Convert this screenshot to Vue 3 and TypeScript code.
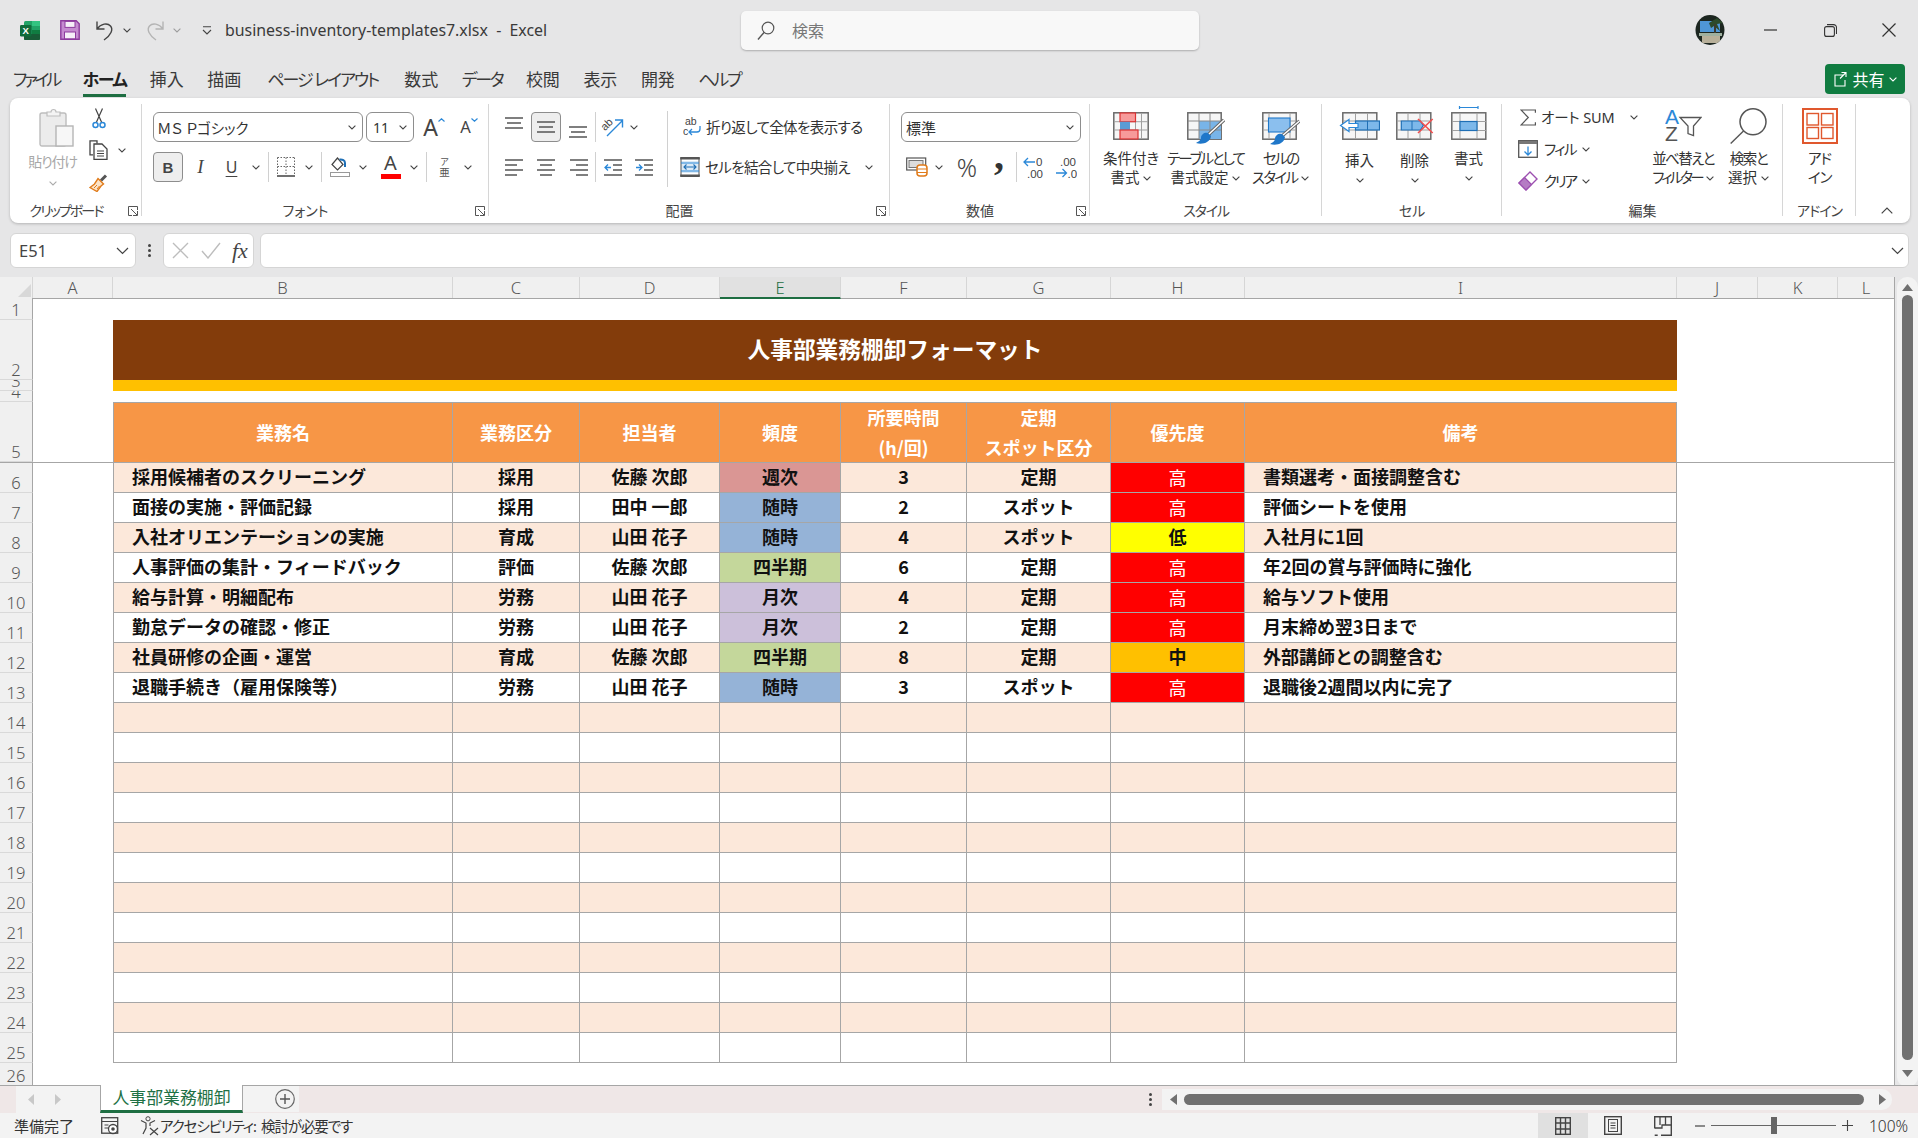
<script setup lang="ts">
interface DataRow {
  num: number
  name: string
  kind: string
  owner: string
  freq: string
  hours: string
  type: string
  prio: string
  note: string
}

const columns = ['A', 'B', 'C', 'D', 'E', 'F', 'G', 'H', 'I', 'J', 'K', 'L']

const rows: DataRow[] = [
  { num: 6, name: '採用候補者のスクリーニング', kind: '採用', owner: '佐藤 次郎', freq: '週次', hours: '3', type: '定期', prio: '高', note: '書類選考・面接調整含む' },
  { num: 7, name: '面接の実施・評価記録', kind: '採用', owner: '田中 一郎', freq: '随時', hours: '2', type: 'スポット', prio: '高', note: '評価シートを使用' },
  { num: 8, name: '入社オリエンテーションの実施', kind: '育成', owner: '山田 花子', freq: '随時', hours: '4', type: 'スポット', prio: '低', note: '入社月に1回' },
  { num: 9, name: '人事評価の集計・フィードバック', kind: '評価', owner: '佐藤 次郎', freq: '四半期', hours: '6', type: '定期', prio: '高', note: '年2回の賞与評価時に強化' },
  { num: 10, name: '給与計算・明細配布', kind: '労務', owner: '山田 花子', freq: '月次', hours: '4', type: '定期', prio: '高', note: '給与ソフト使用' },
  { num: 11, name: '勤怠データの確認・修正', kind: '労務', owner: '山田 花子', freq: '月次', hours: '2', type: '定期', prio: '高', note: '月末締め翌3日まで' },
  { num: 12, name: '社員研修の企画・運営', kind: '育成', owner: '佐藤 次郎', freq: '四半期', hours: '8', type: '定期', prio: '中', note: '外部講師との調整含む' },
  { num: 13, name: '退職手続き（雇用保険等）', kind: '労務', owner: '山田 花子', freq: '随時', hours: '3', type: 'スポット', prio: '高', note: '退職後2週間以内に完了' }
]

const emptyRows = Array.from({ length: 12 }, (_, i) => 14 + i)

const tabs = [
  { label: 'ファイル', cls: 'tab-file' },
  { label: 'ホーム', cls: 'active' },
  { label: '挿入', cls: '' },
  { label: '描画', cls: '' },
  { label: 'ページ レイアウト', cls: 'tab-page' },
  { label: '数式', cls: 'tab-formula' },
  { label: 'データ', cls: 'tab-kana' },
  { label: '校閲', cls: '' },
  { label: '表示', cls: '' },
  { label: '開発', cls: '' },
  { label: 'ヘルプ', cls: 'tab-kana' }
]

const freqClass: Record<string, string> = { 週次: 'f-week', 随時: 'f-any', 四半期: 'f-quarter', 月次: 'f-month' }
const prioClass: Record<string, string> = { 高: 'p-high', 中: 'p-mid', 低: 'p-low' }
</script>

<template>
  <div class="app">
    <svg class="sprite" width="0" height="0">
      <symbol id="chev" viewBox="0 0 8 5"><path d="M.6.6 4 4 7.400.6" fill="none" stroke="#444" stroke-width="1.100" /></symbol>
      <symbol id="launch" viewBox="0 0 10 10"><path d="M9.500 4V.5H.5v9H4M3 3l6 6M9.500 5v4.500H5" fill="none" stroke="#555" stroke-width="1" /></symbol>
      <symbol id="lines-l" viewBox="0 0 18 17"><path d="M0 1h18M0 6h12M0 11h18M0 16h12" stroke="#555" stroke-width="1.400" /></symbol>
      <symbol id="lines-c" viewBox="0 0 18 17"><path d="M0 1h18M3 6h12M0 11h18M3 16h12" stroke="#555" stroke-width="1.400" /></symbol>
      <symbol id="lines-r" viewBox="0 0 18 17"><path d="M0 1h18M6 6h12M0 11h18M6 16h12" stroke="#555" stroke-width="1.400" /></symbol>
      <symbol id="lines-v" viewBox="0 0 18 12"><path d="M0 1h18M2 6h14M0 11h18" stroke="#555" stroke-width="1.400" /></symbol>
    </svg>

    <header class="titlebar">
      <div class="title-left">
        <svg class="i-xl" width="21" height="21" viewBox="0 0 21 21">
          <rect x="4" y="1" width="16" height="19" rx="1.500" fill="#21a366" />
          <rect x="12" y="1" width="8" height="5" fill="#33c481" />
          <rect x="12" y="10" width="8" height="5" fill="#107c41" />
          <rect x="4" y="14" width="16" height="6" rx="1" fill="#185c37" />
          <rect x="0" y="5" width="11.500" height="11.500" rx="1.200" fill="#0f6b3a" />
          <text x="5.700" y="14.200" text-anchor="middle" font-size="9.500" font-weight="700" fill="#fff" font-family="Liberation Sans">X</text>
        </svg>
        <svg class="i-save" width="20" height="20" viewBox="0 0 20 20">
          <path d="M.8.8h15.400l3 3v15.400H.8z" fill="#c58bd0" stroke="#8e3b9e" stroke-width="1.400" />
          <rect x="5" y="1.400" width="10" height="6" fill="#f6eef8" stroke="#8e3b9e" />
          <rect x="4.500" y="12" width="11" height="6.800" fill="#f6eef8" stroke="#8e3b9e" />
        </svg>
        <svg class="i-undo" width="20" height="21" viewBox="0 0 20 21"><path d="M2 1.500v7.500h7.500M2 9C6 3.500 12.500 2.500 15.500 6 18.500 9.500 16 15 9 20" fill="none" stroke="#444" stroke-width="1.400" /></svg>
        <svg class="chev qat-chev"><use href="#chev" /></svg>
        <svg class="i-redo" width="20" height="21" viewBox="0 0 20 21"><path d="M18 1.500v7.500h-7.500M18 9C14 3.500 7.500 2.500 4.500 6 1.500 9.500 4 15 11 20" fill="none" stroke="#b4b4b4" stroke-width="1.400" /></svg>
        <svg class="chev qat-chev dim"><use href="#chev" /></svg>
        <svg class="i-more" width="10" height="9" viewBox="0 0 10 9"><path d="M1 .8h8M1 4l4 4 4-4" fill="none" stroke="#444" stroke-width="1.100" /></svg>
        <span class="doc-title">business-inventory-templates7.xlsx&nbsp; - &nbsp;Excel</span>
      </div>
      <div class="search">
        <svg width="18" height="20" viewBox="0 0 18 20"><circle cx="11" cy="7" r="5.800" fill="none" stroke="#555" stroke-width="1.200" /><path d="M7 11.500 1 18.500" stroke="#555" stroke-width="1.400" /></svg>
        <span>検索</span>
      </div>
      <div class="title-right">
        <svg class="avatar" width="30" height="30" viewBox="0 0 30 30">
          <defs><clipPath id="av"><ellipse cx="15" cy="15" rx="14.500" ry="15" /></clipPath></defs>
          <g clip-path="url(#av)">
            <rect width="30" height="30" fill="#1c2620" />
            <rect x="5" y="6" width="20" height="11" fill="#4f96d6" />
            <path d="M14 8l8-5 6 5-6 1 3 7-6-5-3 2z" fill="#2c4a2c" />
            <rect x="19" y="9" width="2" height="12" fill="#3b3b30" />
            <rect x="4" y="18" width="23" height="3" fill="#9fb0a0" />
            <rect x="7" y="21" width="18" height="7" fill="#b8b09a" />
          </g>
        </svg>
        <div class="winbtn"><svg width="13" height="2" viewBox="0 0 13 2"><path d="M0 1h13" stroke="#333" stroke-width="1.200" /></svg></div>
        <div class="winbtn"><svg width="13" height="13" viewBox="0 0 13 13"><rect x=".6" y="2.600" width="9.800" height="9.800" rx="2" fill="none" stroke="#333" stroke-width="1.100" /><path d="M3 .6h6.500a3 3 0 0 1 3 3V10" fill="none" stroke="#333" stroke-width="1.100" /></svg></div>
        <div class="winbtn last"><svg width="14" height="14" viewBox="0 0 14 14"><path d="M.5.5l13 13M13.500.5l-13 13" stroke="#333" stroke-width="1.200" /></svg></div>
      </div>
    </header>

    <nav class="tabsrow">
      <span v-for="t in tabs" :key="t.label" class="tab" :class="t.cls">{{ t.label }}</span>
      <button class="share">
        <svg width="15" height="16" viewBox="0 0 15 16"><path d="M8.500 1.500h4.500V6M13 1.500 7 7.500M10 4H2v11h10V9" fill="none" stroke="#fff" stroke-width="1.100" /></svg>
        <span>共有</span>
        <svg class="chev white"><use href="#chev" /></svg>
      </button>
    </nav>

    <section class="ribbon">
      <!-- クリップボード -->
      <div class="grp g-clip">
        <div class="grp-body clip-body">
          <div class="paste">
            <svg width="35" height="39" viewBox="0 0 35 39">
              <rect x="1" y="5" width="26" height="33" rx="2" fill="#ececec" stroke="#bdbdbd" stroke-width="1.400" />
              <path d="M8 8V4h4a2.500 2.500 0 0 1 5 0h4v4z" fill="#f4f4f4" stroke="#bdbdbd" stroke-width="1.200" />
              <rect x="17" y="18" width="17" height="20" fill="#f7f7f7" stroke="#b5b5b5" stroke-width="1.400" />
            </svg>
            <span class="paste-text">貼り付け</span>
            <svg class="chev dim"><use href="#chev" /></svg>
          </div>
          <div class="clip-tools">
            <svg width="14" height="21" viewBox="0 0 14 21"><path d="M3.500 .5 9.500 14M10.500 .5 4.500 14" stroke="#444" stroke-width="1.200" /><circle cx="3.500" cy="17" r="2.500" fill="none" stroke="#2b88d8" stroke-width="1.500" /><circle cx="10.500" cy="17" r="2.500" fill="none" stroke="#2b88d8" stroke-width="1.500" /></svg>
            <div class="copy-line">
              <svg width="20" height="20" viewBox="0 0 20 20"><path d="M8 3.500V.8H1v14h3" fill="none" stroke="#444" stroke-width="1.300" /><path d="M5 4h8l5 5v10.300H5z" fill="#fff" stroke="#444" stroke-width="1.300" /><path d="M8 11h7M8 13.500h7M8 16h7" stroke="#444" /></svg>
              <svg class="chev"><use href="#chev" /></svg>
            </div>
            <svg width="20" height="19" viewBox="0 0 20 19"><path d="M12 7.500 17 2.500" stroke="#555" stroke-width="3" /><path d="M9 5.500 14.500 11 12 13 8 18.500 1 14.500 5.500 11z" fill="#fbe3c8" stroke="#e07b1a" stroke-width="1.400" /><path d="M5 15l3-3M8 16l2.500-3" stroke="#e07b1a" /></svg>
          </div>
        </div>
        <div class="grp-label pad-launch ls-19">クリップボード</div>
        <svg class="launcher"><use href="#launch" /></svg>
      </div>

      <!-- フォント -->
      <div class="grp g-font">
        <div class="grp-body">
          <div class="row font-r1">
            <div class="combo font-name"><span>ＭＳ Ｐゴシック</span><svg class="chev"><use href="#chev" /></svg></div>
            <div class="combo font-size"><span>11</span><svg class="chev"><use href="#chev" /></svg></div>
            <div class="t"><span class="grow-a">A<svg width="7" height="4" viewBox="0 0 7 4"><path d="M.5 3.500 3.500.8 6.500 3.500" fill="none" stroke="#2b88d8" stroke-width="1.200" /></svg></span></div>
            <div class="t"><span class="shrink-a">A<svg width="7" height="4" viewBox="0 0 7 4"><path d="M.5.5 3.500 3.200 6.500.5" fill="none" stroke="#2b88d8" stroke-width="1.200" /></svg></span></div>
          </div>
          <div class="row font-r2">
            <div class="t"><span class="btn-on bold-b">B</span></div>
            <div class="t fi">I</div>
            <div class="t fu">U</div>
            <div class="t"><svg class="chev"><use href="#chev" /></svg></div>
            <div class="t"><i class="vsep" /></div>
            <div class="t"><svg width="18" height="20" viewBox="0 0 18 20"><path d="M.5.5h17M.5 9.500h17M9 .5v18M.5.5v18M17.500.5v18" stroke="#666" stroke-dasharray="1.500 1.500" fill="none" /><path d="M0 19h18" stroke="#333" stroke-width="1.400" /></svg></div>
            <div class="t"><svg class="chev"><use href="#chev" /></svg></div>
            <div class="t"><i class="vsep" /></div>
            <div class="t"><svg width="20" height="20" viewBox="0 0 20 20"><path d="M7.500 1 2 7.500 7.500 13 13 7.500z" fill="#fff" stroke="#444" stroke-width="1.200" /><path d="M9.500 2.500c3-.5 5.500 1 5.500 3.500v4" fill="none" stroke="#1f6fb5" stroke-width="2" /><rect x=".5" y="15.500" width="19" height="4" fill="#fff" stroke="#999" /></svg></div>
            <div class="t"><svg class="chev"><use href="#chev" /></svg></div>
            <div class="t"><span class="color-a">A<i /></span></div>
            <div class="t"><svg class="chev"><use href="#chev" /></svg></div>
            <div class="t"><i class="vsep" /></div>
            <div class="t"><span class="furi"><small>ア</small>亜</span></div>
            <div class="t"><svg class="chev"><use href="#chev" /></svg></div>
          </div>
        </div>
        <div class="grp-label pad-launch">フォント</div>
        <svg class="launcher"><use href="#launch" /></svg>
      </div>

      <!-- 配置 -->
      <div class="grp g-align">
        <div class="grp-body align-body">
          <div class="align-left">
            <div class="row align-r1">
              <div class="t top-a"><svg class="lines3"><use href="#lines-v" /></svg></div>
              <div class="t"><span class="btn-on mid-btn"><svg class="lines3"><use href="#lines-v" /></svg></span></div>
              <div class="t bot-a"><svg class="lines3"><use href="#lines-v" /></svg></div>
              <div class="t"><i class="vsep" /></div>
              <div class="t">
                <svg width="24" height="22" viewBox="0 0 24 22"><text x="0" y="12" transform="rotate(-45 6 9)" font-size="11" fill="#444" font-family="Liberation Sans">ab</text><path d="M6 20 21 5M14 4h7.500v7.500" fill="none" stroke="#2b88d8" stroke-width="1.400" /></svg>
              </div>
              <div class="t"><svg class="chev"><use href="#chev" /></svg></div>
            </div>
            <div class="row align-r2">
              <div class="t"><svg class="lines"><use href="#lines-l" /></svg></div>
              <div class="t"><svg class="lines"><use href="#lines-c" /></svg></div>
              <div class="t"><svg class="lines"><use href="#lines-r" /></svg></div>
              <div class="t"><i class="vsep" /></div>
              <div class="t"><svg width="18" height="17" viewBox="0 0 18 17"><path d="M0 1h18M9 6h9M9 11h9M0 16h18" stroke="#555" stroke-width="1.400" /><path d="M7 8.500H1M4 5.500l-3 3 3 3" fill="none" stroke="#2b88d8" stroke-width="1.300" /></svg></div>
              <div class="t"><svg width="18" height="17" viewBox="0 0 18 17"><path d="M0 1h18M9 6h9M9 11h9M0 16h18" stroke="#555" stroke-width="1.400" /><path d="M1 8.500h6M4 5.500l3 3-3 3" fill="none" stroke="#2b88d8" stroke-width="1.300" /></svg></div>
            </div>
          </div>
          <i class="vsep tall" />
          <div class="align-right">
            <div class="txt-btn wrap">
              <svg width="19" height="20" viewBox="0 0 19 20"><text x="2" y="8" font-size="10.500" fill="#444" font-family="Liberation Sans">ab</text><text x="0" y="18" font-size="10.500" fill="#444" font-family="Liberation Sans">c</text><path d="M6 15h8a3 3 0 0 0 3-3V9M9 12l-3 3 3 3" fill="none" stroke="#2b88d8" stroke-width="1.300" /></svg>
              <span class="ls-06">折り返して全体を表示する</span>
            </div>
            <div class="txt-btn merge">
              <svg width="20" height="20" viewBox="0 0 20 20"><rect x="1" y="4" width="18" height="12" fill="#dbeaf7" /><path d="M.2 1.200h19.600M.2 18.800h19.600" stroke="#555" stroke-width="2.400" /><path d="M1 1v18M19 1v18" stroke="#555" /><path d="M1 6h18M1 14h18" stroke="#2b88d8" /><path d="M4 10h12M6.500 7.500 4 10l2.500 2.500M13.500 7.500 16 10l-2.500 2.500" fill="none" stroke="#1f6fb5" stroke-width="1.100" /></svg>
              <span class="ls-06">セルを結合して中央揃え</span>
              <svg class="chev merge-chev"><use href="#chev" /></svg>
            </div>
          </div>
        </div>
        <div class="grp-label pad-launch">配置</div>
        <svg class="launcher"><use href="#launch" /></svg>
      </div>

      <!-- 数値 -->
      <div class="grp g-num">
        <div class="grp-body">
          <div class="row"><div class="combo num-fmt"><span>標準</span><svg class="chev"><use href="#chev" /></svg></div></div>
          <div class="row num-r2">
            <div class="t"><svg width="22" height="20" viewBox="0 0 22 20"><rect x=".7" y="1" width="19" height="12" fill="#fff" stroke="#555" stroke-width="1.200" /><rect x="3" y="3.500" width="14" height="7" fill="#ddd" stroke="#777" /><rect x="11" y="8" width="10" height="11" rx="3" fill="#fff" stroke="#e07b1a" stroke-width="1.500" /><path d="M11 12h10M11 15.500h10" stroke="#e07b1a" stroke-width="1.200" /></svg></div>
            <div class="t"><svg class="chev"><use href="#chev" /></svg></div>
            <div class="t pct">%</div>
            <div class="t comma">,</div>
            <div class="t"><i class="vsep" /></div>
            <div class="t"><svg width="22" height="23" viewBox="0 0 22 23"><path d="M12 6H1M5 2 1 6l4 4" fill="none" stroke="#2b88d8" stroke-width="1.300" /><text x="13" y="10" font-size="11.500" fill="#444" font-family="Liberation Sans">0</text><text x="4" y="22" font-size="11.500" fill="#444" font-family="Liberation Sans">.00</text></svg></div>
            <div class="t"><svg width="22" height="23" viewBox="0 0 22 23"><text x="5" y="10" font-size="11.500" fill="#444" font-family="Liberation Sans">.00</text><path d="M1 17h10M7.500 13l4 4-4 4" fill="none" stroke="#2b88d8" stroke-width="1.300" /><text x="12.500" y="22" font-size="11.500" fill="#444" font-family="Liberation Sans">.0</text></svg></div>
          </div>
        </div>
        <div class="grp-label pad-launch">数値</div>
        <svg class="launcher"><use href="#launch" /></svg>
      </div>

      <!-- スタイル -->
      <div class="grp g-style">
        <div class="grp-body big-row">
          <div class="big w66">
            <div class="big-icon">
              <svg width="36" height="28" viewBox="0 0 36 28">
                <rect x=".8" y=".8" width="34.400" height="26.400" fill="#f6f6f6" stroke="#6a6a6a" stroke-width="1.500" />
                <path d="M1 9.700h34M1 18h34M22.500 1v26M28.500 1v26" stroke="#a0a0a0" />
                <rect x="7" y="1" width="15.500" height="8.700" fill="#f79a9a" stroke="#d33" stroke-width="1.200" />
                <rect x="7" y="9.700" width="10" height="8.300" fill="#5b9bd5" />
                <rect x="7" y="18" width="18" height="9" fill="#f79a9a" stroke="#d33" stroke-width="1.200" />
              </svg>
            </div>
            <div class="big-text">条件付き<br>書式 <svg class="chev"><use href="#chev" /></svg></div>
          </div>
          <div class="big w83">
            <div class="big-icon">
              <svg width="38" height="34" viewBox="0 0 38 34">
                <rect x=".8" y=".8" width="33.400" height="26.400" fill="#f6f6f6" stroke="#6a6a6a" stroke-width="1.500" />
                <rect x="12" y="9" width="22" height="18" fill="#78b4e8" />
                <path d="M1 9h33M1 18h33M12 1v26M23 1v26" stroke="#8a8a8a" />
                <path d="M37 8 21 23" stroke="#666" stroke-width="3.400" />
                <path d="M37 8 21 23" stroke="#fff" stroke-width="1.500" />
                <path d="M21 21c-3-1-7 1-7 5 0 2-3 4-5 5 6 2 14 0 15-7z" fill="#1f77c9" />
              </svg>
            </div>
            <div class="big-text"><span class="ls-2">テーブルとして</span><br>書式設定 <svg class="chev"><use href="#chev" /></svg></div>
          </div>
          <div class="big w67">
            <div class="big-icon">
              <svg width="38" height="34" viewBox="0 0 38 34">
                <rect x=".8" y=".8" width="33.400" height="26.400" fill="#f6f6f6" stroke="#6a6a6a" stroke-width="1.500" />
                <path d="M1 9h33M1 18h33M7 1v26M28 1v26" stroke="#a0a0a0" />
                <rect x="6.500" y="6" width="21.500" height="14" fill="#8bbfee" stroke="#1f77c9" stroke-width="1.100" />
                <path d="M37.500 9 20 24" stroke="#666" stroke-width="3.400" />
                <path d="M37.500 9 20 24" stroke="#fff" stroke-width="1.500" />
                <path d="M20 22c-3-1-7 1-7 5 0 2-3 4-5 5 6 2 14 0 15-7z" fill="#1f77c9" />
              </svg>
            </div>
            <div class="big-text"><span class="ls-2">セルの</span><br><span class="ls-17">スタイル</span> <svg class="chev"><use href="#chev" /></svg></div>
          </div>
        </div>
        <div class="grp-label ls-12">スタイル</div>
      </div>

      <!-- セル -->
      <div class="grp g-cell">
        <div class="grp-body big-row">
          <div class="big w55">
            <div class="big-icon">
              <svg width="41" height="28" viewBox="0 0 41 28">
                <rect x="3.800" y=".8" width="34" height="26.400" fill="#f6f6f6" stroke="#6a6a6a" stroke-width="1.500" />
                <path d="M4 9h34M4 18h34M16.500 1v26M28.500 1v26" stroke="#a0a0a0" />
                <rect x="16.500" y="9" width="24" height="9" fill="#7db8ea" stroke="#1f6fb5" stroke-width="1.200" />
                <path d="M28.500 9v9" stroke="#1f6fb5" />
                <path d="M10 7.500 1.500 13.500 10 19.500V15.500H19V11.500H10z" fill="#fff" stroke="#2b88d8" stroke-width="1.200" />
              </svg>
            </div>
            <div class="big-text cell-text">挿入<br><svg class="chev"><use href="#chev" /></svg></div>
          </div>
          <div class="big w55">
            <div class="big-icon">
              <svg width="38" height="28" viewBox="0 0 38 28">
                <rect x=".8" y=".8" width="34" height="26.400" fill="#f6f6f6" stroke="#6a6a6a" stroke-width="1.500" />
                <path d="M1 9h34M1 18h34M12 1v26M24 1v26" stroke="#a0a0a0" />
                <path d="M5.300 9h19l3 4.500-3 4.500h-19z" fill="#7db8ea" stroke="#1f6fb5" stroke-width="1.200" />
                <path d="M16 9v9" stroke="#1f6fb5" />
                <path d="M22 7l14.700 14M36.700 7 22 21" stroke="#f04e4e" stroke-width="1.600" />
              </svg>
            </div>
            <div class="big-text cell-text">削除<br><svg class="chev"><use href="#chev" /></svg></div>
          </div>
          <div class="big w53">
            <div class="big-icon fmt-icon">
              <svg width="36" height="34" viewBox="0 0 36 34">
                <path d="M8.500 1.500h18.500M8.500 0v3M27 0v3" stroke="#2b88d8" stroke-width="1.200" />
                <rect x=".8" y="6.800" width="34" height="26.400" fill="#f6f6f6" stroke="#6a6a6a" stroke-width="1.500" />
                <path d="M1 15.500h34M1 24.500h34M9 7v26M26 7v26" stroke="#a0a0a0" />
                <rect x="9" y="15.500" width="17" height="9" fill="#7db8ea" stroke="#1f6fb5" stroke-width="1.200" />
              </svg>
            </div>
            <div class="big-text">書式<br><svg class="chev"><use href="#chev" /></svg></div>
          </div>
        </div>
        <div class="grp-label">セル</div>
      </div>

      <!-- 編集 -->
      <div class="grp g-edit">
        <div class="grp-body edit-body">
          <div class="edit-list">
            <div class="txt-btn sm">
              <svg class="sigma" width="16" height="17" viewBox="0 0 16 17"><path d="M15.400 3.800V1H1l7.300 7.500L1 16h14.400v-2.800" fill="none" stroke="#555" stroke-width="1.200" /></svg>
              <span class="tight-latin">オート SUM</span>
              <svg class="chev sum-chev"><use href="#chev" /></svg>
            </div>
            <div class="txt-btn sm">
              <svg width="20" height="18" viewBox="0 0 20 18"><rect x=".7" y=".7" width="18.600" height="16.600" fill="#fff" stroke="#555" stroke-width="1.300" /><rect x="1" y="1" width="18" height="3" fill="#777" /><path d="M10 6.500v8.500M6.500 11.500 10 15l3.500-3.500" fill="none" stroke="#2b88d8" stroke-width="1.300" /></svg>
              <span class="ls-15">フィル</span>
              <svg class="chev"><use href="#chev" /></svg>
            </div>
            <div class="txt-btn sm">
              <svg width="20" height="20" viewBox="0 0 20 20"><path d="M12 1 19 8 8 19 1 12z" fill="#fff" stroke="#9c4fb0" stroke-width="1.400" /><path d="M6.500 6.500 13.500 13.500 8 19 1 12z" fill="#b57cc4" stroke="#9c4fb0" stroke-width="1.200" /></svg>
              <span class="ls-22">クリア</span>
              <svg class="chev"><use href="#chev" /></svg>
            </div>
          </div>
          <div class="big w78">
            <div class="big-icon flush">
              <svg width="37" height="35" viewBox="0 0 37 35">
                <text x="0" y="16" font-size="21" fill="#2b88d8" font-family="Liberation Sans">A</text>
                <text x="0" y="33" font-size="21" fill="#555" font-family="Liberation Sans">Z</text>
                <path d="M15 9.500h21L28.500 18v9.500l-5.500-2V18z" fill="#fff" stroke="#555" stroke-width="1.300" />
              </svg>
            </div>
            <div class="big-text"><span class="ls-16">並べ替えと</span><br><span class="ls-28">フィルター</span> <svg class="chev"><use href="#chev" /></svg></div>
          </div>
          <div class="big w50">
            <div class="big-icon flush">
              <svg width="37" height="36" viewBox="0 0 37 36"><circle cx="23" cy="13.800" r="13" fill="#fff" stroke="#555" stroke-width="1.500" /><path d="M13.500 23 .7 35.500" stroke="#555" stroke-width="1.400" /></svg>
            </div>
            <div class="big-text"><span class="ls-15">検索と</span><br>選択 <svg class="chev"><use href="#chev" /></svg></div>
          </div>
        </div>
        <div class="grp-label">編集</div>
      </div>

      <!-- アドイン -->
      <div class="grp g-addin">
        <div class="grp-body big-row">
          <div class="big w73">
            <div class="big-icon flush">
              <svg width="36" height="36" viewBox="0 0 36 36">
                <rect x="1" y="1" width="34" height="34" fill="#fff" stroke="#e0582e" stroke-width="2" />
                <rect x="5" y="5.500" width="11.500" height="11.500" fill="#fff" stroke="#e0582e" stroke-width="1.400" />
                <rect x="19.500" y="5.500" width="11.500" height="11.500" fill="#fff" stroke="#e0582e" stroke-width="1.400" />
                <rect x="5" y="19.500" width="11.500" height="11" fill="#fff" stroke="#e0582e" stroke-width="1.400" />
                <rect x="19.500" y="19.500" width="11.500" height="11" fill="#fff" stroke="#e0582e" stroke-width="1.400" />
              </svg>
            </div>
            <div class="big-text ls-1">アド<br>イン</div>
          </div>
        </div>
        <div class="grp-label ls-1">アドイン</div>
      </div>

      <div class="ribbon-tail">
        <svg width="12" height="7" viewBox="0 0 12 7"><path d="M.7 6.300 6 1l5.300 5.300" fill="none" stroke="#444" stroke-width="1.200" /></svg>
      </div>
    </section>

    <section class="formula-bar">
      <div class="namebox"><span>E51</span><svg width="13" height="8" viewBox="0 0 13 8"><path d="M1 1l5.500 5.500L12 1" fill="none" stroke="#444" stroke-width="1.200" /></svg></div>
      <div class="dots"><i /><i /><i /></div>
      <div class="fx-box">
        <svg width="17" height="17" viewBox="0 0 17 17"><path d="M1 1l15 15M16 1 1 16" stroke="#bdbdbd" stroke-width="1.400" /></svg>
        <svg width="20" height="17" viewBox="0 0 20 17"><path d="M1 9l6 7L19 1" fill="none" stroke="#bdbdbd" stroke-width="1.400" /></svg>
        <span class="fx">fx</span>
      </div>
      <div class="formula-input">
        <svg width="13" height="8" viewBox="0 0 13 8"><path d="M1 1l5.500 5.500L12 1" fill="none" stroke="#444" stroke-width="1.200" /></svg>
      </div>
    </section>

    <section class="sheet-wrap">
      <div class="sheet">
        <div class="sheet-row col-head">
          <div class="corner"><svg width="13" height="13" viewBox="0 0 13 13"><path d="M13 0v13H0z" fill="#d8d8d8" /></svg></div>
          <div v-for="c in columns" :key="c" class="col-label" :class="{ current: c === 'E' }">{{ c }}</div>
        </div>

        <div class="sheet-row h-22">
          <div class="row-label">1</div>
        </div>
        <div class="sheet-row h-60">
          <div class="row-label">2</div>
          <div />
          <div class="title-cell">人事部業務棚卸フォーマット</div>
        </div>
        <div class="sheet-row h-11">
          <div class="row-label clip">3</div>
          <div />
          <div class="gold-cell" />
        </div>
        <div class="sheet-row h-11">
          <div class="row-label clip">4</div>
        </div>
        <div class="sheet-row h-61 frozen">
          <div class="row-label">5</div>
          <div />
          <div class="head first">業務名</div>
          <div class="head">業務区分</div>
          <div class="head">担当者</div>
          <div class="head">頻度</div>
          <div class="head">所要時間<br>(h/回)</div>
          <div class="head">定期<br>スポット区分</div>
          <div class="head">優先度</div>
          <div class="head">備考</div>
        </div>

        <div v-for="(r, i) in rows" :key="r.num" class="sheet-row data" :class="{ zebra: i % 2 === 0 }">
          <div class="row-label">{{ r.num }}</div>
          <div />
          <div class="cell first left">{{ r.name }}</div>
          <div class="cell">{{ r.kind }}</div>
          <div class="cell">{{ r.owner }}</div>
          <div class="cell" :class="freqClass[r.freq]">{{ r.freq }}</div>
          <div class="cell">{{ r.hours }}</div>
          <div class="cell">{{ r.type }}</div>
          <div class="cell" :class="prioClass[r.prio]">{{ r.prio }}</div>
          <div class="cell left">{{ r.note }}</div>
        </div>

        <div v-for="n in emptyRows" :key="n" class="sheet-row data" :class="{ zebra: n % 2 === 0 }">
          <div class="row-label">{{ n }}</div>
          <div />
          <div class="cell first" />
          <div class="cell" />
          <div class="cell" />
          <div class="cell" />
          <div class="cell" />
          <div class="cell" />
          <div class="cell" />
          <div class="cell" />
        </div>

        <div class="sheet-row h-22 last-row">
          <div class="row-label">26</div>
        </div>
      </div>

      <aside class="vscroll">
        <svg width="11" height="7" viewBox="0 0 11 7"><path d="M5.500 0 11 7H0z" fill="#707070" /></svg>
        <div class="vthumb" />
        <svg width="11" height="7" viewBox="0 0 11 7"><path d="M5.500 7 11 0H0z" fill="#707070" /></svg>
      </aside>
    </section>

    <section class="tabbar">
      <div class="tab-nav">
        <svg width="6" height="11" viewBox="0 0 6 11"><path d="M6 0v11L0 5.500z" fill="#c8c8c8" /></svg>
        <svg width="6" height="11" viewBox="0 0 6 11"><path d="M0 0v11l6-5.500z" fill="#c8c8c8" /></svg>
      </div>
      <div class="sheet-tab">人事部業務棚卸</div>
      <div class="add-sheet">
        <svg width="20" height="20" viewBox="0 0 20 20"><circle cx="10" cy="10" r="9.300" fill="none" stroke="#666" stroke-width="1.200" /><path d="M10 5v10M5 10h10" stroke="#555" stroke-width="1.400" /></svg>
      </div>
      <div class="hdots"><i /><i /><i /></div>
      <div class="hscroll">
        <svg width="7" height="11" viewBox="0 0 7 11"><path d="M7 0v11L0 5.500z" fill="#707070" /></svg>
        <div class="hthumb" />
        <svg width="7" height="11" viewBox="0 0 7 11"><path d="M0 0v11l7-5.500z" fill="#707070" /></svg>
      </div>
    </section>

    <footer class="statusbar">
      <span class="ready">準備完了</span>
      <svg class="st-macro" width="18" height="18" viewBox="0 0 18 18"><rect x=".7" y=".7" width="16" height="15.500" fill="none" stroke="#444" stroke-width="1.300" /><path d="M1 4.500h16M3.500 8h4M3.500 11h4" stroke="#444" stroke-width="1.200" /><circle cx="12" cy="12" r="4.500" fill="#fff" stroke="#444" stroke-width="1.300" /><circle cx="12" cy="12" r="1.800" fill="#444" /></svg>
      <svg class="st-acc" width="19" height="20" viewBox="0 0 19 20"><circle cx="8" cy="2.800" r="2.100" fill="none" stroke="#444" /><path d="M1 4.500 6 7v5l-3 6M15 4.500 10 7v3" fill="none" stroke="#444" stroke-width="1.200" /><path d="M10 12l8 7M18 12l-8 7" stroke="#444" stroke-width="1.200" /></svg>
      <span class="acc-text">アクセシビリティ:&nbsp;&nbsp;検討が必要です</span>
      <div class="view-btns">
        <div class="view-btn on"><svg width="16" height="18" viewBox="0 0 16 18"><rect x=".7" y=".7" width="14.600" height="16.600" fill="none" stroke="#444" stroke-width="1.400" /><path d="M5.500 1v16M10.500 1v16M1 6h14M1 12h14" stroke="#444" stroke-width="1.400" /></svg></div>
        <div class="view-btn"><svg width="18" height="19" viewBox="0 0 18 19"><rect x=".7" y=".7" width="16.600" height="17.600" fill="none" stroke="#444" stroke-width="1.400" /><rect x="4.500" y="3.500" width="9" height="12" fill="none" stroke="#444" /><path d="M6.500 7h5M6.500 9.500h5M6.500 12h5" stroke="#444" /></svg></div>
        <div class="view-btn"><svg width="18" height="20" viewBox="0 0 18 20"><path d="M.7 12.500V.7h16.600v18.600H7M.7 19.300h3" fill="none" stroke="#444" stroke-width="1.400" /><path d="M6 1v8M11.500 1v8M1 12h7V9h9.500" fill="none" stroke="#444" stroke-width="1.300" /></svg></div>
      </div>
      <div class="zoom-slider">
        <svg width="10" height="2" viewBox="0 0 10 2"><path d="M0 1h10" stroke="#444" stroke-width="1.200" /></svg>
        <div class="slider-track"><i /></div>
        <svg width="11" height="11" viewBox="0 0 11 11"><path d="M0 5.500h11M5.500 0v11" stroke="#444" stroke-width="1.100" /></svg>
      </div>
      <span class="zoom-val">100%</span>
    </footer>
  </div>
</template>

<style>
html, body { margin: 0; padding: 0; background: #e6e6e6; }
</style>

<style scoped>
.app {
  width: 1918px;
  height: 1138px;
  display: flex;
  flex-direction: column;
  overflow: hidden;
  background: #e6e6e7;
  color: #333;
  font-family: "Noto Sans", "Noto Sans CJK JP", sans-serif;
  font-feature-settings: "palt";
}
.sprite { position: absolute; }
.chev { width: 8px; height: 5px; flex: none; display: inline-block; }
.chev.dim { opacity: .45; }
.chev.white { filter: brightness(0) invert(1); }

/* kana in the reference font runs narrower */
.ls-06 { letter-spacing: -.6px; }
.ls-1 { letter-spacing: -1px; }
.ls-12 { letter-spacing: -1.200px; }
.ls-15 { letter-spacing: -1.500px; }
.ls-16 { letter-spacing: -1.600px; }
.ls-17 { letter-spacing: -1.700px; }
.ls-19 { letter-spacing: -1.900px; }
.ls-2 { letter-spacing: -2px; }
.ls-22 { letter-spacing: -2.200px; }
.ls-28 { letter-spacing: -2.800px; }

/* title bar */
.titlebar { height: 60px; flex: none; display: flex; align-items: center; }
.title-left { width: 741px; flex: none; display: flex; align-items: center; padding-left: 20px; box-sizing: border-box; }
.i-save { margin-left: 19px; }
.i-undo { margin-left: 15px; }
.qat-chev { margin-left: 8px; }
.i-redo { margin-left: 14px; }
.i-more { margin-left: 21px; }
.doc-title { margin-left: 13px; font-size: 15.900px; color: #3a3a3a; white-space: nowrap; }
.search {
  width: 458px;
  height: 39px;
  margin-top: 1px;
  flex: none;
  box-sizing: border-box;
  display: flex;
  align-items: center;
  gap: 17px;
  padding-left: 16px;
  background: #f8f8f8;
  border-radius: 5px;
  box-shadow: 0 1px 2px rgba(0, 0, 0, .25);
  color: #777;
  font-size: 16px;
}
.search span { padding-bottom: 2px; }
.title-right { flex: 1; display: flex; align-items: center; justify-content: flex-end; }
.avatar { margin-right: 15px; }
.winbtn { width: 60px; height: 40px; display: flex; align-items: center; justify-content: center; }
.winbtn.last { width: 58px; }

/* ribbon tabs */
.tabsrow { height: 38px; flex: none; display: flex; align-items: center; padding-left: 13px; gap: 23.500px; position: relative; font-size: 17px; }
.tab { position: relative; height: 34px; line-height: 35px; white-space: nowrap; color: #3a3a3a; }
.tab.active { font-weight: 700; color: #222; letter-spacing: -1.600px; }
.tab.active::after { content: ""; position: absolute; left: 0; right: 0; bottom: -1px; height: 3px; background: #1e6e42; }
.tab-file { letter-spacing: -3.200px; }
.tab-page { letter-spacing: -2px; margin-left: 2.500px; }
.tab-formula { margin-left: 2.500px; }
.tab-kana { letter-spacing: -2.300px; }
.share {
  margin-left: auto;
  margin-right: 13px;
  width: 80px;
  height: 30px;
  border: 0;
  border-radius: 4px;
  background: #107c41;
  color: #fff;
  display: flex;
  align-items: center;
  justify-content: center;
  gap: 4px;
  font: inherit;
  font-size: 16px;
  padding: 0;
}

/* ribbon */
.ribbon {
  height: 125px;
  flex: none;
  margin: 0 8px 0 10px;
  background: #fff;
  border-radius: 8px;
  box-shadow: 0 1px 3px rgba(0, 0, 0, .22);
  display: flex;
  font-size: 14.500px;
  position: relative;
}
.grp { position: relative; flex: none; margin-top: 6px; height: 119px; box-sizing: border-box; display: flex; flex-direction: column; }
.grp::after { content: ""; position: absolute; right: 0; top: 0; width: 1px; height: 112px; background: #d6d6d6; }
.grp-body { height: 97px; flex: none; box-sizing: border-box; padding-top: 8px; }
.grp-label { height: 22px; line-height: 20px; text-align: center; font-size: 14px; color: #444; white-space: nowrap; }
.pad-launch { padding-right: 20px; }
.launcher { position: absolute; right: 4px; bottom: 7px; width: 10px; height: 10px; }
.g-clip { width: 132px; }
.g-font { width: 347px; }
.g-align { width: 401px; }
.g-num { width: 200px; }
.g-style { width: 232px; }
.g-cell { width: 180px; }
.g-edit { width: 281px; }
.g-addin { width: 73px; }
.ribbon-tail { flex: 1; display: flex; align-items: flex-end; justify-content: center; padding-bottom: 9px; padding-left: 8px; }

.row { display: grid; height: 30px; align-items: center; }
.row + .row { margin-top: 10px; }
.t { height: 30px; display: flex; align-items: center; justify-content: center; min-width: 0; }
.vsep { display: block; width: 1px; height: 30px; background: #d0d0d0; flex: none; }
.vsep.tall { height: 76px; margin-top: -1px; }
.btn-on { display: flex; align-items: center; justify-content: center; background: #eeeeee; border: 1px solid #8d8d8d; border-radius: 4px; box-sizing: border-box; }

.combo { height: 30px; box-sizing: border-box; border: 1px solid #8e8e8e; border-radius: 6px; display: flex; align-items: center; justify-content: space-between; padding: 0 6px 0 4px; color: #333; background: #fff; font-size: 14px; }

/* clipboard */
.clip-body { display: flex; padding-top: 4px; padding-left: 17px; }
.paste { width: 51px; display: flex; flex-direction: column; align-items: center; }
.paste svg:first-child { margin-left: 8px; }
.paste-text { margin-top: 4px; color: #a8a8a8; font-size: 14px; white-space: nowrap; letter-spacing: -1.200px; }
.paste .chev { margin-top: 10px; }
.clip-tools { margin-left: 11px; display: flex; flex-direction: column; align-items: flex-start; }
.clip-tools > svg:first-child { margin-left: 3px; }
.clip-tools > svg:last-child { margin-top: 13px; }
.copy-line { display: flex; align-items: center; gap: 9px; margin-top: 11px; }

/* font */
.g-font .grp-body { padding-left: 11px; }
.font-r1 { grid-template-columns: 210px 48px 36px 30px; }
.font-name { font-size: 14.500px; padding-left: 3px; }
.font-size { margin-left: 3px; width: 48px; padding-left: 6px; }
.grow-a { display: inline-flex; align-items: flex-start; font-size: 23px; line-height: 24px; font-family: "Noto Sans", sans-serif; color: #444; margin-left: 10px; }
.grow-a svg { margin-top: 3px; }
.shrink-a { display: inline-flex; align-items: flex-start; font-size: 16.500px; line-height: 20px; font-family: "Noto Sans", sans-serif; color: #444; margin-left: 14px; }
.shrink-a svg { margin-top: 1px; }
.font-r2 { grid-template-columns: 30px 35px 27px 21px 5px 29px 17px 9px 28px 17px 39px 7px 19px 17px 29px; }
.bold-b { width: 30px; height: 30px; font-weight: 700; font-size: 15px; font-family: "Liberation Sans", sans-serif; color: #444; }
.fi { font-family: "Liberation Serif", serif; font-style: italic; font-size: 19px; color: #444; }
.fu { font-size: 16px; color: #444; text-decoration: underline; text-underline-offset: 3px; font-family: "Noto Sans", sans-serif; }
.color-a { display: flex; flex-direction: column; align-items: center; font-size: 20px; line-height: 20px; color: #444; font-family: "Noto Sans", sans-serif; margin-top: -2px; }
.color-a i { display: block; width: 20px; height: 5px; background: #ff0000; margin-top: 1px; }
.furi { display: flex; flex-direction: column; align-items: center; font-size: 10.500px; line-height: 11px; color: #555; }
.furi small { font-size: 9px; }

/* alignment */
.align-body { display: flex; padding-left: 9px; }
.align-left { width: 169px; flex: none; }
.align-r1 { grid-template-columns: 32px 31px 34px 1px 34px 8px; }
.align-r2 { grid-template-columns: 32px 32px 33px 1px 34px 28px; }
.lines3 { width: 18px; height: 12px; }
.lines { width: 18px; height: 17px; }
.top-a { align-items: flex-start; padding-top: 5px; box-sizing: border-box; }
.bot-a svg { margin-top: 9px; }
.mid-btn { width: 30px; height: 30px; }
.align-right { padding-left: 12px; display: flex; flex-direction: column; gap: 10px; }
.txt-btn { height: 30px; display: flex; align-items: center; gap: 5px; white-space: nowrap; font-size: 14.500px; color: #333; }
.txt-btn span { padding-bottom: 1px; }
.txt-btn:first-child { padding-left: 3px; }
.txt-btn.wrap { gap: 4px; }
.merge-chev { margin-left: 10px; }

/* number */
.g-num .grp-body { padding-left: 11px; }
.num-fmt { width: 180px; font-size: 15px; }
.num-r2 { grid-template-columns: 31px 14px 42px 22px 12px 24px 40px; }
.pct { font-size: 25px; font-weight: 300; color: #444; font-family: "Noto Sans", sans-serif; }
.comma { font-size: 40px; font-weight: 700; color: #333; font-family: "Liberation Serif", serif; line-height: 14px; align-items: flex-start; margin-top: -6px; }

/* big buttons */
.big-row { display: flex; padding-top: 0; padding-left: 8px; }
.g-cell .big-row { padding-left: 10px; }
.g-addin .big-row { padding-left: 0; }
.big { flex: none; display: flex; flex-direction: column; align-items: center; padding-top: 4px; box-sizing: border-box; }
.big-icon { height: 40px; display: flex; align-items: flex-start; justify-content: center; padding-top: 4px; box-sizing: border-box; }
.big-icon.flush { padding-top: 0; }
.big-text { margin-top: 1px; line-height: 19px; font-size: 14.500px; text-align: center; white-space: nowrap; color: #333; }
.big-text .chev { vertical-align: 2px; }
.cell-text { margin-top: 3px; }
.fmt-icon { padding-top: 0; margin-top: -2px; height: 42px; }
.w66 { width: 66px; }
.w83 { width: 83px; }
.w67 { width: 67px; }
.w55 { width: 55px; }
.w53 { width: 53px; }
.w78 { width: 78px; }
.w50 { width: 53px; }
.w73 { width: 73px; }

/* edit */
.edit-body { display: flex; padding: 0 0 0 16px; }
.edit-list { width: 126px; flex: none; display: flex; flex-direction: column; gap: 4px; margin-top: -1px; }
.edit-list .txt-btn { height: 28px; gap: 6px; padding-left: 0; }
.sigma { margin-left: 2px; margin-right: -1px; }
.tight-latin { letter-spacing: -.1px; }
.sum-chev { margin-left: 9px; }

/* formula bar */
.formula-bar { height: 54px; flex: none; display: flex; align-items: flex-start; padding: 10px 9px 0 10px; box-sizing: border-box; }
.namebox, .fx-box, .formula-input { height: 35px; box-sizing: border-box; background: #fff; border: 1px solid #d5d5d5; border-radius: 6px; display: flex; align-items: center; }
.namebox { width: 126px; padding: 0 6px 0 8px; justify-content: space-between; font-size: 16.500px; color: #444; }
.dots { width: 27px; height: 35px; display: flex; flex-direction: column; align-items: center; justify-content: center; gap: 2px; }
.dots i { width: 3px; height: 3px; background: #444; border-radius: 50%; }
.fx-box { width: 91px; padding-left: 8px; gap: 12px; }
.fx { font-family: "Liberation Serif", serif; font-style: italic; font-size: 22px; font-weight: 400; color: #444; margin-left: -1px; }
.formula-input { flex: 1; margin-left: 6px; justify-content: flex-end; padding-right: 4px; }

/* sheet */
.sheet-wrap { height: 808px; flex: none; display: flex; }
.sheet {
  width: 1895px;
  flex: none;
  box-sizing: border-box;
  border-right: 1px solid #a6a6a6;
  background: #fff;
  font-family: "Noto Sans CJK JP", sans-serif;
  font-feature-settings: normal;
}
.sheet-row {
  display: grid;
  grid-template-columns: 33px 80px 340px 127px 140px 121px 126px 144px 134px 432px 81px 80px 1fr;
}
.col-head { height: 21px; background: #f0f0f0; border-bottom: 1px solid #a6a6a6; box-sizing: content-box; margin-bottom: -1px; }
.corner { display: flex; justify-content: flex-end; align-items: flex-end; padding: 0 1px 2px 0; border-right: 1px solid #d6d6d6; box-sizing: border-box; }
.col-label { height: 21px; box-sizing: border-box; border-right: 1px solid #d6d6d6; text-align: center; line-height: 21px; font-size: 16.500px; color: #555; font-family: "Noto Sans", sans-serif; font-weight: 300; }
.col-label:last-child { border-right: 0; }
.col-label.current { background: #e1e1e1; color: #1e6e42; border-bottom: 2px solid #1e6e42; height: 22px; }
.row-label {
  grid-column: 1;
  background: #f0f0f0;
  border-right: 1px solid #a6a6a6;
  border-bottom: 1px solid #d9d9d9;
  box-sizing: border-box;
  text-align: center;
  font-size: 16.500px;
  color: #555;
  font-family: "Noto Sans", sans-serif;
  font-weight: 300;
  display: flex;
  align-items: flex-end;
  justify-content: center;
  line-height: 19px;
  overflow: hidden;
}
.h-22 { height: 22px; }
.h-60 { height: 60px; }
.h-61 { height: 61px; }
.h-11 { height: 11px; }
.frozen { border-bottom: 1px solid #a6a6a6; box-sizing: border-box; grid-template-rows: 60px; }
.title-cell { grid-column: 3 / span 8; background: #833c0b; color: #fff; font-size: 22.700px; font-weight: 700; display: flex; align-items: center; justify-content: center; padding-bottom: 4px; box-sizing: border-box; }
.gold-cell { grid-column: 3 / span 8; background: #ffc000; }
.head {
  background: #f79646;
  color: #fff;
  font-weight: 700;
  font-size: 18px;
  line-height: 30px;
  text-align: center;
  display: flex;
  align-items: center;
  justify-content: center;
  border-top: 1px solid #a6a6a6;
  border-right: 1px solid #a6a6a6;
  box-sizing: border-box;
  padding-bottom: 2px;
  min-height: 0;
}
.head.first, .cell.first { border-left: 1px solid #a6a6a6; }
.data { height: 30px; }
.cell {
  border-right: 1px solid #a6a6a6;
  border-bottom: 1px solid #a6a6a6;
  box-sizing: border-box;
  font-size: 18px;
  font-weight: 700;
  color: #111;
  display: flex;
  align-items: center;
  justify-content: center;
  white-space: nowrap;
  line-height: 20px;
  padding-bottom: 4px;
}
.cell.left { justify-content: flex-start; padding-left: 18px; }
.zebra .cell { background: #fce8da; }
.sheet-row .f-week { background: #da9694; }
.sheet-row .f-any { background: #95b3d7; }
.sheet-row .f-quarter { background: #c4d79b; }
.sheet-row .f-month { background: #ccc0da; }
.sheet-row .p-high { background: #ff0000; color: #fff; font-weight: 400; padding-bottom: 2px; }
.sheet-row .p-mid { background: #ffc000; }
.sheet-row .p-low { background: #ffff00; }
.last-row .row-label { border-bottom: 0; }

.vscroll { flex: 1; margin-left: 2px; display: flex; flex-direction: column; align-items: center; background: #f3f3f3; border-radius: 10px; height: 810px; padding-top: 7px; box-sizing: border-box; }
.vthumb { width: 11px; height: 765px; margin: 4px 0 10px; border-radius: 6px; background: #707070; }

/* sheet tabs */
.tabbar { height: 28px; flex: none; display: flex; align-items: stretch; background: #efe7e7; border-top: 1px solid #a6a6a6; box-sizing: border-box; position: relative; }
.tab-nav { width: 84px; margin-left: 16px; background: #f3f3f3; display: flex; align-items: center; gap: 21px; padding-left: 12px; box-sizing: border-box; }
.sheet-tab { width: 143px; box-sizing: border-box; background: #fff; color: #1e7145; font-size: 16.900px; text-align: center; line-height: 21px; border-left: 1px solid #a6a6a6; border-right: 1px solid #a6a6a6; border-bottom: 3px solid #1e6e42; margin-top: -1px; height: 28px; padding-top: 1px; white-space: nowrap; font-family: "Noto Sans CJK JP", sans-serif; font-feature-settings: normal; }
.add-sheet { width: 56px; background: #f3f3f3; display: flex; align-items: center; justify-content: center; margin-bottom: 1px; padding-left: 28px; box-sizing: border-box; }
.hdots { margin-left: 845px; width: 12px; display: flex; flex-direction: column; align-items: center; justify-content: center; gap: 2px; }
.hdots i { width: 3px; height: 3px; border-radius: 50%; background: #444; }
.hscroll { margin-left: 6px; margin-top: 3px; width: 730px; height: 21px; box-sizing: border-box; background: #f3f3f3; border-radius: 0 10px 10px 0; display: flex; align-items: center; padding: 0 5px 0 8px; }
.hthumb { width: 680px; height: 11px; border-radius: 6px; background: #707070; margin: 0 15px 0 7px; }

/* status bar */
.statusbar { flex: 1; display: flex; align-items: center; background: #f3f3f3; font-size: 14.500px; color: #333; position: relative; }
.ready { margin-left: 14px; font-size: 15px; }
.st-macro { margin-left: 27px; }
.st-acc { margin-left: 21px; }
.acc-text { margin-left: 1px; letter-spacing: -1.100px; }
.view-btns { margin-left: auto; display: flex; align-self: stretch; }
.view-btn { width: 50px; display: flex; align-items: center; justify-content: center; }
.view-btn.on { background: #e0e0e0; }
.zoom-slider { display: flex; align-items: center; margin-left: 7px; gap: 6px; }
.slider-track { width: 125px; height: 1px; background: #666; position: relative; }
.slider-track i { position: absolute; left: 60px; top: -8px; width: 6px; height: 17px; background: #666; }
.zoom-val { margin-left: 16px; margin-right: 8px; width: 41px; font-size: 15.500px; font-family: "Noto Sans", sans-serif; font-weight: 300; white-space: nowrap; }
</style>
